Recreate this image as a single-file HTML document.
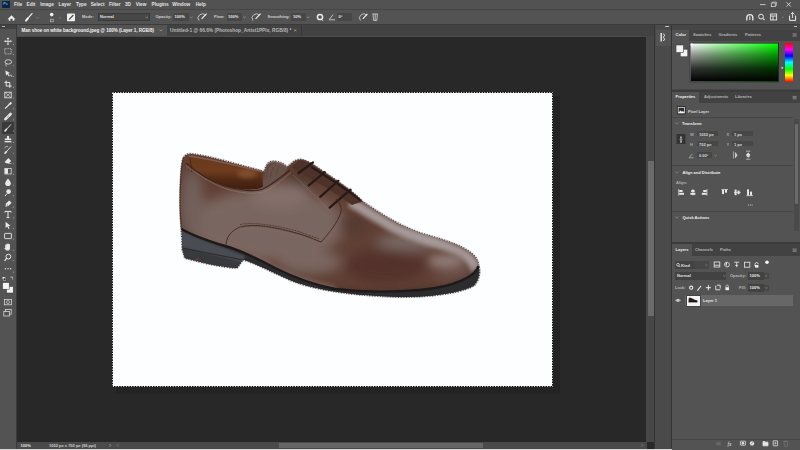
<!DOCTYPE html>
<html><head><meta charset="utf-8">
<style>
*{margin:0;padding:0;box-sizing:border-box}
html,body{width:800px;height:450px;overflow:hidden;background:#282828;font-family:"Liberation Sans",sans-serif;color:#d6d6d6}
.a{position:absolute}
.t{position:absolute;font-size:4.7px;line-height:6px;white-space:nowrap;color:#e4e4e4;font-weight:bold}
.s{position:absolute;font-size:4px;line-height:5px;white-space:nowrap;color:#d0d0d0;font-weight:bold}
.b{font-weight:bold}
svg{position:absolute;overflow:visible}
</style></head><body>
<!-- ============ MENUBAR ============ -->
<div class="a" style="left:0;top:0;width:800px;height:9px;background:#525252"></div>
<div class="a" style="left:2px;top:1px;width:8px;height:7px;background:#0b2542;border-radius:1px"></div>
<div class="t b" style="left:3.2px;top:2px;font-size:3.8px;line-height:5px;color:#5fb0ff">Ps</div>
<div class="t" style="left:14px;top:1.6px">File</div>
<div class="t" style="left:26.5px;top:1.6px">Edit</div>
<div class="t" style="left:40.3px;top:1.6px">Image</div>
<div class="t" style="left:58.6px;top:1.6px">Layer</div>
<div class="t" style="left:76px;top:1.6px">Type</div>
<div class="t" style="left:90.7px;top:1.6px">Select</div>
<div class="t" style="left:109px;top:1.6px">Filter</div>
<div class="t" style="left:125px;top:1.6px">3D</div>
<div class="t" style="left:135.7px;top:1.6px">View</div>
<div class="t" style="left:151.6px;top:1.6px">Plugins</div>
<div class="t" style="left:172.3px;top:1.6px">Window</div>
<div class="t" style="left:195.7px;top:1.6px">Help</div>
<svg style="left:0;top:0" width="800" height="9">
 <line x1="760" y1="4.6" x2="765.5" y2="4.6" stroke="#d0d0d0" stroke-width="0.9"/>
 <rect x="771.3" y="3" width="4" height="3.6" fill="none" stroke="#d0d0d0" stroke-width="0.8"/>
 <path d="M772.6 3V2h3.8v3.5h-1" fill="none" stroke="#d0d0d0" stroke-width="0.7"/>
 <path d="M786.5 2.3l4.3 4.3M790.8 2.3l-4.3 4.3" stroke="#d8d8d8" stroke-width="0.9"/>
</svg>
<!-- ============ OPTIONS BAR ============ -->
<div class="a" style="left:0;top:9px;width:800px;height:15.5px;background:#535353"></div>
<div class="a" style="left:0;top:24px;width:800px;height:1px;background:#3b3b3b"></div>
<div class="a" style="left:0;top:8.6px;width:800px;height:0.8px;background:#464646"></div>
<svg style="left:0;top:9px" width="800" height="16">
 <!-- home -->
 <path d="M7.6 10.2L11.5 6.2L15.4 10.2H14.2V11.8H12.6V9.8H10.4V11.8H8.8V10.2Z" fill="#f2f2f2"/>
 <!-- brush -->
 <path d="M27.6 9.6L32 4.6" stroke="#eaeaea" stroke-width="1.3" stroke-linecap="round"/><path d="M26 11.6L27.8 9.4" stroke="#f4f4f4" stroke-width="2" stroke-linecap="round"/>
 <path d="M36.2 8.2l1.3 1.1l1.3-1.1" stroke="#8a8a8a" stroke-width="0.6" fill="none"/>
 <circle cx="51.7" cy="5.6" r="1.8" fill="#f0f0f0"/>
 <rect x="50.3" y="10.2" width="3" height="2.6" fill="none" stroke="#c8c8c8" stroke-width="0.6"/>
 <path d="M58.8 8.2l1.3 1.1l1.3-1.1" stroke="#8a8a8a" stroke-width="0.6" fill="none"/>
 <rect x="67" y="4.6" width="8" height="7.6" rx="0.8" fill="#f0f0f0"/>
 <path d="M69 10.6L73.4 6" stroke="#444" stroke-width="1.1"/>
 <!-- airbrush pressure icons -->
 <path d="M199 11.5a4 4 0 1 1 6.5 -5" fill="none" stroke="#dadada" stroke-width="0.8"/>
 <path d="M201.6 9.8L206.6 4.6" stroke="#eeeeee" stroke-width="1.2"/>
 <path d="M253 11.5a4 4 0 1 1 6.5 -5" fill="none" stroke="#dadada" stroke-width="0.8"/>
 <path d="M255.6 9.8L260.6 4.6" stroke="#eeeeee" stroke-width="1.2"/>
 <!-- gear -->
 <circle cx="320" cy="8" r="2.6" fill="none" stroke="#eaeaea" stroke-width="1.5"/>
 <circle cx="322.6" cy="11.2" r="0.6" fill="#ddd"/>
 <!-- angle -->
 <path d="M329.2 10.8H335M329.2 10.8L333 5.6" stroke="#d8d8d8" stroke-width="0.8" fill="none"/>
 <!-- pressure size -->
 <path d="M360.4 11.5a4 4 0 1 1 6.5 -5" fill="none" stroke="#dadada" stroke-width="0.8"/>
 <path d="M362.8 9.8L367.4 4.8" stroke="#eeeeee" stroke-width="1.2"/>
 <!-- symmetry -->
 <path d="M372.4 5h5.6M373 5l0.6 6.4h3.2l0.6-6.4M375.2 5v6.4" stroke="#d8d8d8" stroke-width="0.8" fill="none"/>
 <!-- right icons -->
 <path d="M746.8 11.6v-3a3 3 0 0 1 6 0v3" stroke="#eeeeee" stroke-width="1.3" fill="none"/>
 <path d="M749.8 11v-3.6" stroke="#eeeeee" stroke-width="1"/>
 <circle cx="761" cy="7.6" r="2.4" fill="none" stroke="#e6e6e6" stroke-width="1"/>
 <path d="M762.8 9.4l1.8 1.8" stroke="#e6e6e6" stroke-width="1.1"/>
 <rect x="770.6" y="5" width="6" height="6" fill="none" stroke="#e6e6e6" stroke-width="0.9"/>
 <path d="M770.6 7h6M773 7v4" stroke="#e6e6e6" stroke-width="0.9"/>
 <path d="M782 8.4h1.6" stroke="#9a9a9a" stroke-width="0.6"/>
 <path d="M789.6 6.6v4.8h6v-4.8" stroke="#eeeeee" stroke-width="1" fill="none"/>
 <path d="M792.6 9V3.6M790.9 5.2l1.7-1.7l1.7 1.7" stroke="#eeeeee" stroke-width="0.9" fill="none"/>
</svg>
<div class="s" style="left:82px;top:14.3px">Mode:</div>
<div class="a" style="left:97.5px;top:13.4px;width:52px;height:7.2px;background:#474747;border:0.5px solid #3a3a3a"></div>
<div class="s" style="left:100px;top:14.3px;color:#e0e0e0">Normal</div>
<svg style="left:0;top:9px" width="800" height="16">
 <path d="M145.6 7.8l1.2 1l1.2-1" stroke="#aaa" stroke-width="0.6" fill="none"/>
 <path d="M190.2 7.8l1.2 1l1.2-1" stroke="#aaa" stroke-width="0.6" fill="none"/>
 <path d="M243.4 7.8l1.2 1l1.2-1" stroke="#aaa" stroke-width="0.6" fill="none"/>
 <path d="M307 7.8l1.2 1l1.2-1" stroke="#aaa" stroke-width="0.6" fill="none"/>
</svg>
<div class="s" style="left:155.5px;top:14.3px">Opacity:</div>
<div class="a" style="left:173px;top:13.4px;width:15.5px;height:7.2px;background:#474747"></div>
<div class="s" style="left:174.5px;top:14.3px;color:#e8e8e8">100%</div>
<div class="s" style="left:214px;top:14.3px">Flow:</div>
<div class="a" style="left:226.5px;top:13.4px;width:15.5px;height:7.2px;background:#474747"></div>
<div class="s" style="left:228px;top:14.3px;color:#e8e8e8">100%</div>
<div class="s" style="left:267.5px;top:14.3px">Smoothing:</div>
<div class="a" style="left:291px;top:13.4px;width:14.5px;height:7.2px;background:#474747"></div>
<div class="s" style="left:293px;top:14.3px;color:#e8e8e8">10%</div>
<div class="a" style="left:336.5px;top:13.4px;width:15.5px;height:7.2px;background:#474747"></div>
<div class="s" style="left:338.5px;top:14.3px;color:#e8e8e8">0°</div>
<!-- ============ TAB BAR ============ -->
<div class="a" style="left:17px;top:25px;width:638px;height:10.5px;background:#424242"></div>
<div class="a" style="left:17px;top:35.5px;width:630px;height:0.8px;background:#4a4a4a"></div>
<div class="a" style="left:17px;top:25px;width:150px;height:11px;background:#535353"></div>
<div class="t b" style="left:21.5px;top:27.5px;color:#f4f4f4;font-size:4.5px">Man shoe on white background.jpeg @ 100% (Layer 1, RGB/8)</div>
<svg style="left:0;top:25px" width="320" height="11"><path d="M159.4 4.6l1.4 1.4l1.4-1.4" stroke="#bdbdbd" stroke-width="0.6" fill="none"/><path d="M294.2 4.4l2 2M296.2 4.4l-2 2" stroke="#bdbdbd" stroke-width="0.6"/></svg>
<div class="t" style="left:170px;top:27.6px;color:#b8b8b8;font-size:4.8px">Untitled-1 @ 66.6% (Photoshop_Artist1PPIx, RGB/8) *</div>
<div class="a" style="left:301px;top:25px;width:0.6px;height:10.5px;background:#383838"></div>
<!-- ============ TOOLBAR ============ -->
<div class="a" style="left:0;top:25px;width:17px;height:425px;background:#535353"></div>
<div class="a" style="left:0;top:25px;width:16.5px;height:4px;background:#424242"></div>
<div class="a" style="left:2px;top:26.3px;width:3px;height:1.2px;background:#bbb;border-radius:1px"></div>
<div class="a" style="left:16px;top:25px;width:1px;height:425px;background:#3a3a3a"></div>
<div class="a" style="left:2px;top:122px;width:12px;height:12px;background:#3a3a3a;border-radius:1px"></div>
<!--TOOLS--><svg style="left:0;top:0" width="17" height="450"><g transform="translate(8 41.3)"><path d="M0-3.4v6.8M-3.4 0h6.8" stroke="#e8e8e8" stroke-width="0.9"/><path d="M0-3.8l-1.3 1.4h2.6zM0 3.8l-1.3-1.4h2.6zM-3.8 0l1.4-1.3v2.6zM3.8 0l-1.4-1.3v2.6z" fill="#e8e8e8"/></g><path d="M12.6 44.9h1.2v-1.2z" fill="#bbbbbb"/><g transform="translate(8 51.3)"><rect x="-3.2" y="-2.6" width="6.4" height="5.2" fill="none" stroke="#e8e8e8" stroke-width="0.7" stroke-dasharray="1 0.7"/></g><path d="M12.6 54.9h1.2v-1.2z" fill="#bbbbbb"/><g transform="translate(8 62.5)"><ellipse cx="0.3" cy="-0.6" rx="3.3" ry="2.2" fill="none" stroke="#e8e8e8" stroke-width="0.8"/><path d="M-2 1.2q-0.6 1.6 0.6 2.6" stroke="#e8e8e8" stroke-width="0.7" fill="none"/></g><path d="M12.6 66.1h1.2v-1.2z" fill="#bbbbbb"/><g transform="translate(8 73.4)"><path d="M-2.6-2.8l4.6 2.4l-1.8 0.6l1.6 2.4l-1 0.6l-1.4-2.4l-1.4 1.2z" fill="#e8e8e8"/><path d="M1.4 1.8h2.2v1.8" stroke="#e8e8e8" stroke-width="0.6" fill="none"/></g><path d="M12.6 77.0h1.2v-1.2z" fill="#bbbbbb"/><g transform="translate(8 84.2)"><path d="M-1.8-3.6v5.4h5.4M-3.6-1.8h5.4v5.4" stroke="#e8e8e8" stroke-width="1" fill="none"/></g><path d="M12.6 87.8h1.2v-1.2z" fill="#bbbbbb"/><g transform="translate(8 95)"><rect x="-3.2" y="-2.8" width="6.4" height="5.6" fill="none" stroke="#e8e8e8" stroke-width="0.8"/><path d="M-3.2-2.8l6.4 5.6M3.2-2.8l-6.4 5.6" stroke="#e8e8e8" stroke-width="0.6"/></g><path d="M12.6 98.6h1.2v-1.2z" fill="#bbbbbb"/><g transform="translate(8 105.7)"><path d="M-3 3l4.2-4.2" stroke="#e8e8e8" stroke-width="1.2"/><path d="M0.6-1.6l1.6-1.8a1 1 0 0 1 1.4 1.4l-1.8 1.6z" fill="#e8e8e8"/></g><path d="M12.6 109.3h1.2v-1.2z" fill="#bbbbbb"/><g transform="translate(8 116.6)"><path d="M-2.6 2.6l5.2-5.2" stroke="#e8e8e8" stroke-width="2.6" stroke-linecap="round"/><path d="M-0.6 0.6l1.2-1.2" stroke="#555" stroke-width="0.8"/></g><path d="M12.6 120.19999999999999h1.2v-1.2z" fill="#bbbbbb"/><g transform="translate(8 127.8)"><path d="M-3 3.2l1.4-1.6" stroke="#e8e8e8" stroke-width="1.6" stroke-linecap="round"/><path d="M-1.2 1.2l4.2-4.6" stroke="#e8e8e8" stroke-width="0.9"/></g><path d="M12.6 131.4h1.2v-1.2z" fill="#bbbbbb"/><g transform="translate(8 139.3)"><path d="M-1-3.4h2v2.6h2.2v1.6h-6.4v-1.6h2.2z" fill="#e8e8e8"/><rect x="-3.4" y="1.6" width="6.8" height="1.4" fill="#e8e8e8"/></g><path d="M12.6 142.9h1.2v-1.2z" fill="#bbbbbb"/><g transform="translate(8 150)"><path d="M-3 3.2l1.4-1.6" stroke="#e8e8e8" stroke-width="1.6" stroke-linecap="round"/><path d="M-1.2 1.2l4.2-4.6" stroke="#e8e8e8" stroke-width="0.9"/><path d="M-3.4-1.6a2.4 2.4 0 0 1 3.4-1.8" stroke="#e8e8e8" stroke-width="0.6" fill="none"/></g><path d="M12.6 153.6h1.2v-1.2z" fill="#bbbbbb"/><g transform="translate(8 160.5)"><path d="M-3.4 1.4l3.8-3.8l2.8 2.8l-2.4 2.4h-2.6z" fill="#e8e8e8"/><path d="M-0.2 3h3.6" stroke="#e8e8e8" stroke-width="0.6"/></g><path d="M12.6 164.1h1.2v-1.2z" fill="#bbbbbb"/><g transform="translate(8 171.2)"><rect x="-3.2" y="-2.8" width="6.4" height="5.6" fill="none" stroke="#e8e8e8" stroke-width="0.7"/><rect x="-3" y="-2.6" width="3" height="5.2" fill="#e8e8e8"/></g><path d="M12.6 174.79999999999998h1.2v-1.2z" fill="#bbbbbb"/><g transform="translate(8 182)"><path d="M0-3.6q-2.8 3.4-2.8 4.8a2.8 2.8 0 0 0 5.6 0q0-1.4-2.8-4.8z" fill="#e8e8e8"/></g><path d="M12.6 185.6h1.2v-1.2z" fill="#bbbbbb"/><g transform="translate(8 192.6)"><circle cx="0.6" cy="-1" r="2.3" fill="#e8e8e8"/><path d="M-0.8 0.8l-2.2 2.6" stroke="#e8e8e8" stroke-width="1"/></g><path d="M12.6 196.2h1.2v-1.2z" fill="#bbbbbb"/><g transform="translate(8 203.8)"><path d="M-2.6 3l0.6-3.2l3.2-3.2l2.4 2.4l-3.2 3.2z" fill="#e8e8e8"/><circle cx="-0.6" cy="1.2" r="0.5" fill="#555"/></g><path d="M12.6 207.4h1.2v-1.2z" fill="#bbbbbb"/><g transform="translate(8 214.6)"><path d="M-3-3.2h6v1.2M-3-3.2v1.2M0-3.2v6.2M-1.4 3h2.8" stroke="#e8e8e8" stroke-width="1" fill="none"/></g><path d="M12.6 218.2h1.2v-1.2z" fill="#bbbbbb"/><g transform="translate(8 225.2)"><path d="M-2.4-3.4v6.2l1.6-1.6l1.4 2.6l1-0.5l-1.3-2.5h2.4z" fill="#e8e8e8"/></g><path d="M12.6 228.79999999999998h1.2v-1.2z" fill="#bbbbbb"/><g transform="translate(8 236)"><rect x="-3.4" y="-2.6" width="6.8" height="5.2" rx="0.5" fill="none" stroke="#e8e8e8" stroke-width="0.9"/></g><path d="M12.6 239.6h1.2v-1.2z" fill="#bbbbbb"/><g transform="translate(8 247.2)"><path d="M-2.8 0.6v-2.6a0.6 0.6 0 0 1 1.2 0v-1a0.6 0.6 0 0 1 1.2 0v-0.2a0.6 0.6 0 0 1 1.2 0v0.6a0.6 0.6 0 0 1 1.2 0v3.4q0 2.6-2.4 2.6h-0.6q-1.2 0-2.6-2z" fill="#e8e8e8"/></g><path d="M12.6 250.79999999999998h1.2v-1.2z" fill="#bbbbbb"/><g transform="translate(8 257.4)"><circle cx="0.4" cy="-0.8" r="2.4" fill="none" stroke="#e8e8e8" stroke-width="1"/><path d="M-1.2 0.8l-2.2 2.6" stroke="#e8e8e8" stroke-width="1.3"/></g><path d="M12.6 261.0h1.2v-1.2z" fill="#bbbbbb"/><g transform="translate(8 268.8)"><circle cx="-2.6" cy="0" r="0.7" fill="#e8e8e8"/><circle cx="0" cy="0" r="0.7" fill="#e8e8e8"/><circle cx="2.6" cy="0" r="0.7" fill="#e8e8e8"/></g><path d="M12.6 272.40000000000003h1.2v-1.2z" fill="#bbbbbb"/><rect x="2.6" y="277" width="2.2" height="2.2" fill="#eee"/><rect x="3.6" y="278" width="2.2" height="2.2" fill="#222" stroke="#eee" stroke-width="0.4"/><path d="M10 277.2h2.6v2.6M11.8 276.4l0.8 0.8l-0.8 0.8" stroke="#ddd" stroke-width="0.5" fill="none"/><rect x="6.6" y="286.4" width="6.6" height="6.6" fill="#f4f4f4" stroke="#333" stroke-width="0.5"/><rect x="2.6" y="282.6" width="6.6" height="6.6" fill="#f4f4f4" stroke="#333" stroke-width="0.5"/><rect x="4.6" y="299.4" width="6.8" height="5.4" fill="none" stroke="#e8e8e8" stroke-width="0.7"/><circle cx="8" cy="302.1" r="1.5" fill="none" stroke="#e8e8e8" stroke-width="0.6"/><rect x="5.4" y="309.6" width="5.8" height="4.6" fill="none" stroke="#e8e8e8" stroke-width="0.7"/><rect x="3.8" y="311.4" width="5.8" height="4.6" fill="#535353" stroke="#e8e8e8" stroke-width="0.7"/></svg><!--/TOOLS-->
<!-- ============ CANVAS ============ -->
<div class="a" style="left:116px;top:96px;width:444px;height:298px;background:#232323"></div>
<div class="a" style="left:113px;top:93px;width:439px;height:293px;background:#fdfeff"></div>
<!--SHOE--><svg style="left:0;top:0" width="800" height="450"><defs>
<filter id="bl6" x="-50%" y="-50%" width="200%" height="200%"><feGaussianBlur stdDeviation="6"/></filter>
<filter id="bl4" x="-50%" y="-50%" width="200%" height="200%"><feGaussianBlur stdDeviation="4"/></filter>
<filter id="bl2" x="-30%" y="-50%" width="160%" height="200%"><feGaussianBlur stdDeviation="2.2"/></filter>
<filter id="bl1" x="-30%" y="-50%" width="160%" height="200%"><feGaussianBlur stdDeviation="1"/></filter>
<linearGradient id="ling" x1="0" y1="0" x2="0" y2="1">
  <stop offset="0" stop-color="#5a2c16"/><stop offset="0.3" stop-color="#6a3418"/><stop offset="0.75" stop-color="#5e2e16"/><stop offset="1" stop-color="#3e1e10"/></linearGradient>
<clipPath id="upclip"><path d="M183.5 158C185 155 188 153.5 192 154C210 156 235 164 262 171L264 172L266 167C268 162 271 161 275 161.5C280 162 284 164 287 167L291 164C294 161 297 159.5 300 159.5C307 160 315 166 323 171.6C330 176 340 183 349 189.7C354 193.5 358 197 362.5 201.5C375 210 395 224 420 233C440 239 460 244 471 253C476 257 478.5 261 478.5 266C476 276 455 287 420 290C395 292 360 292 335 289C315 285 295 278 275 268C260 260 240 250 225 246C205 240 190 234 181.5 229C180 215 180 190 181 175C181.5 168 182 162 183.5 158Z"/></clipPath>
<clipPath id="soleclip"><path d="M181.5 229C190 234 205 240 225 246C240 250 260 260 275 268C295 278 315 285 335 289C360 292 395 292 420 290C455 287 476 276 478.5 266C480.5 270.5 479.5 280 474 285.5C465 291 440 297 400 297C340 295 310 288 290 280C270 271 255 263 243 259.5L237 268C220 267 200 262 185 258L182.5 250Z"/></clipPath>
</defs>
<path d="M183.5 158C185 155 188 153.5 192 154C210 156 235 164 262 171L264 172L266 167C268 162 271 161 275 161.5C280 162 284 164 287 167L291 164C294 161 297 159.5 300 159.5C307 160 315 166 323 171.6C330 176 340 183 349 189.7C354 193.5 358 197 362.5 201.5C375 210 395 224 420 233C440 239 460 244 471 253C476 257 478.5 261 478.5 266C480.5 270.5 479.5 280 474 285.5C465 291 440 297 400 297C340 295 310 288 290 280C270 271 255 263 243 259.5L237 268C220 267 200 262 185 258L182.5 250L181.5 229C180 215 180 190 181 175C181.5 168 182 162 183.5 158Z" fill="none" stroke="#d4cece" stroke-width="2.6" opacity="0.8"/>
<path d="M183.5 158C185 155 188 153.5 192 154C210 156 235 164 262 171L264 172L266 167C268 162 271 161 275 161.5C280 162 284 164 287 167L291 164C294 161 297 159.5 300 159.5C307 160 315 166 323 171.6C330 176 340 183 349 189.7C354 193.5 358 197 362.5 201.5C375 210 395 224 420 233C440 239 460 244 471 253C476 257 478.5 261 478.5 266C480.5 270.5 479.5 280 474 285.5C465 291 440 297 400 297C340 295 310 288 290 280C270 271 255 263 243 259.5L237 268C220 267 200 262 185 258L182.5 250L181.5 229C180 215 180 190 181 175C181.5 168 182 162 183.5 158Z" fill="none" stroke="#4a4a4a" stroke-width="1.9" stroke-dasharray="1 1.6"/>
<g clip-path="url(#soleclip)"><rect x="175" y="225" width="310" height="80" fill="#2c2c2e"/><path d="M181 246L245 258L237 270L181 262Z" fill="#38393c"/>
<path d="M181 230C200 240 225 247 245 256L243 262C220 256 200 252 181 247Z" fill="#4a4d52" filter="url(#bl1)"/>
<path d="M182.8 248C200 252 225 256 243 260" fill="none" stroke="#2a2a2c" stroke-width="1"/>
<path d="M243 259.5C255 263 270 271 290 280C310 288 340 295 400 297C440 297 465 291 474 286" fill="none" stroke="#2a2a2a" stroke-width="1.4"/>
</g>
<rect x="195.6" y="258.6" width="3" height="1.2" fill="#a83030"/>
<g clip-path="url(#upclip)">
 <rect x="175" y="150" width="310" height="145" fill="#603f34"/>
 <g filter="url(#bl6)">
  <ellipse cx="268" cy="225" rx="78" ry="36" fill="#7a6660"/>
  <ellipse cx="280" cy="195" rx="30" ry="12" fill="#84706c"/>
  <ellipse cx="192" cy="205" rx="12" ry="35" fill="#72605c"/>
  <ellipse cx="304" cy="178" rx="16" ry="8" fill="#4e3428"/>
  <ellipse cx="385" cy="266" rx="40" ry="16" fill="#52322a"/>
  <ellipse cx="352" cy="225" rx="14" ry="10" fill="#553a30"/>
  <ellipse cx="455" cy="270" rx="22" ry="14" fill="#6a4e46"/>
  <ellipse cx="310" cy="262" rx="32" ry="12" fill="#7a6660"/>
  <ellipse cx="410" cy="242" rx="34" ry="8" fill="#7a6a66"/>
 </g>
 <path d="M350 202C362 208 375 217 395 228C410 235 420 238 440 244C455 249 464 253 470 259C474 263 476 266 476 272" fill="none" stroke="#aca2a2" stroke-width="10" opacity="0.9" filter="url(#bl2)"/>
 <ellipse cx="446" cy="261" rx="18" ry="7" fill="#8e7a74" filter="url(#bl4)"/>
 <path d="M330 289C360 292 395 292 420 290C455 287 476 276 478.5 266" fill="none" stroke="#3e2e2a" stroke-width="4" opacity="0.5" filter="url(#bl2)"/>
 <path d="M255 258C265 264 275 270 290 276C305 282 320 285 335 289" fill="none" stroke="#8a7670" stroke-width="6" opacity="0.6" filter="url(#bl2)"/>
</g>
<linearGradient id="ling2" x1="0" y1="158" x2="0" y2="190" gradientUnits="userSpaceOnUse"><stop offset="0" stop-color="#6a3a1e"/><stop offset="0.4" stop-color="#6e3c1e"/><stop offset="0.7" stop-color="#4e2814"/><stop offset="1" stop-color="#3e1e10"/></linearGradient>
<path d="M189 156C205 158 235 165 262 171.5L263 187C255 191 240 190 225 186C210 180 197 172 190 167C188 163 188 160 189 156Z" fill="url(#ling2)"/>

<ellipse cx="247" cy="174" rx="10" ry="4" fill="#8e5a3a" opacity="0.7" filter="url(#bl2)"/>
<path d="M189 156C205 158 235 165 262 171.5" fill="none" stroke="#7e5e50" stroke-width="1.6"/>
<path d="M190 158C191 163 191 168 192 172" fill="none" stroke="#3a2418" stroke-width="0.8"/>
<path d="M263 188L265.5 170C267.5 164 271 161.5 275 161.5C280 162 284 164 288 167.5L282 177Z" fill="#66524a"/>
<path d="M266 166C268 162.5 272 161.5 276 162C280 162.5 284 164.5 287 167" fill="none" stroke="#8e7a72" stroke-width="1"/>
<path d="M270 178L273 167M276 175L279 166" stroke="#4e3a32" stroke-width="0.7" opacity="0.7"/>
<path d="M266 180L268 168C270 164 273 163 276 163" fill="none" stroke="#4e3a32" stroke-width="0.6"/>
<path d="M186 163C195 171 210 181 225 186C240 191 255 192 263 189C272 185 281 177 290 170" fill="none" stroke="#3e261c" stroke-width="1.2"/>
<path d="M186 165.5C196 173 210 183 225 188.5C240 193.5 256 194.5 265 191.5C273 188 282 180 291 172.5" fill="none" stroke="#9c8078" stroke-width="0.7" opacity="0.75"/>
<path d="M300 160C307 160.5 315 166 323 172C330 176.5 340 183.5 349 190C354 194 358 197.5 362.5 201.5L352 205C345 200 330 189 291 167Z" fill="#4c3229"/>
<path d="M311 167C320 172 335 182 348 191C354 195 358 198 361 201" fill="none" stroke="#2a1a15" stroke-width="2.2"/>
<path d="M300 159.6C307 160 315 166 323 171.6C330 176 340 183 349 189.7C354 193.5 358 197 362.5 201.5" fill="none" stroke="#5a3e34" stroke-width="0.8"/>
<path d="M293 175C305 186 318 198 330 211" fill="none" stroke="#9a8078" stroke-width="0.6" opacity="0.6"/>
<g stroke="#261a18" stroke-width="2.2" stroke-linecap="round">
 <path d="M298.5 173L313 162.5"/><path d="M308.7 185.4L324.8 172.2"/><path d="M320.2 196.9L338.4 180.8"/><path d="M329.6 207.7L350.6 189.6"/>
</g>
<path d="M226 246C226 238 230 231 240 227C255 223 275 227 300 234C310 237 316 240 321 242C330 232 338 222 341 212C342 206 339 202 336 199" fill="none" stroke="#43291f" stroke-width="0.9"/>
<path d="M227.2 247C228 240 232 234 241 230C256 226 275 230 300 237C310 240 316 243 322 245.5C332 235 340 224 343 213" fill="none" stroke="#8a6c62" stroke-width="0.55" opacity="0.65"/>
<path d="M240 224.5C255 222 275 225 300 232C308 235 314 237 319 239" fill="none" stroke="#3a241c" stroke-width="0.8" stroke-dasharray="0.9 0.7"/>
<path d="M242 227C256 224.5 275 227.5 300 234.5C308 237.5 314 239.5 319 241.5" fill="none" stroke="#3a241c" stroke-width="0.6" stroke-dasharray="0.9 0.7" opacity="0.7"/>
<path d="M181.5 229C190 234 205 240 225 246C240 250 260 260 275 268C295 278 315 285 335 289C360 292 395 292 420 290C455 287 476 276 478.5 266" fill="none" stroke="#1e1a1a" stroke-width="2.4"/>
<path d="M183.5 158C182 162 181.5 168 181 175C180 190 180 215 181.5 229" fill="none" stroke="#4a3630" stroke-width="1.2"/>
</svg><svg style="left:0;top:0" width="800" height="450"><rect x="112.5" y="92.5" width="440" height="294" fill="none" stroke="#0a0a0a" stroke-width="1"/><rect x="112.5" y="92.5" width="440" height="294" fill="none" stroke="#f0f0f0" stroke-width="1" stroke-dasharray="1 1.6"/></svg><!--/SHOE-->
<!-- ============ DOC SCROLLBARS ============ -->
<div class="a" style="left:646px;top:36px;width:9px;height:406px;background:#474747"></div>
<div class="a" style="left:648px;top:161px;width:6px;height:155px;background:#6b6b6b"></div>
<div class="a" style="left:654px;top:25px;width:1px;height:425px;background:#333"></div>
<!-- status bar -->
<div class="a" style="left:17px;top:441.8px;width:630px;height:6.8px;background:#4a4a4a"></div>
<div class="s" style="left:20.5px;top:443px;color:#e0e0e0">100%</div>
<div class="s" style="left:49px;top:443px;color:#d0d0d0">1052 px x 702 px (96 ppi)</div>
<svg style="left:0;top:442px" width="130" height="7"><path d="M109.6 2.2l1.2 1.2l-1.2 1.2" stroke="#ccc" stroke-width="0.6" fill="none"/></svg>
<div class="a" style="left:279px;top:442.6px;width:204px;height:5.6px;background:#666666"></div>
<svg style="left:0;top:442px" width="660" height="7"><path d="M118.4 2.2l-1.2 1.2l1.2 1.2" stroke="#999" stroke-width="0.6" fill="none"/><path d="M641.6 2.2l1.2 1.2l-1.2 1.2" stroke="#999" stroke-width="0.6" fill="none"/></svg>
<div class="a" style="left:0;top:448.5px;width:800px;height:2px;background:#d4d4d4"></div>
<!-- ============ ICON COLUMN ============ -->
<div class="a" style="left:655px;top:25px;width:17px;height:424px;background:#4a4a4a"></div>
<div class="a" style="left:671px;top:25px;width:1px;height:424px;background:#333"></div>
<div class="a" style="left:655.5px;top:30px;width:15.5px;height:16px;background:#535353"></div>
<!-- strip handles -->
<div class="a" style="left:672px;top:25px;width:128px;height:4.5px;background:#474747"></div>
<div class="a" style="left:665px;top:25.8px;width:3.5px;height:1.3px;background:#c8c8c8;border-radius:0.5px"></div>
<div class="a" style="left:793.5px;top:25.8px;width:3.5px;height:1.3px;background:#c8c8c8;border-radius:0.5px"></div>
<svg style="left:0;top:0" width="800" height="60">
 <rect x="660.5" y="33" width="1.4" height="8.5" fill="#eeeeee"/>
 <path d="M663.4 33.6q2.4 1.4 0 3.8q2.4 1.6 0 3.6" stroke="#eeeeee" stroke-width="1" fill="none"/>
</svg>
<!-- right panel bg -->
<div class="a" style="left:672px;top:29.5px;width:128px;height:420px;background:#535353"></div>
<!-- COLOR PANEL -->
<div class="a" style="left:672px;top:29.5px;width:128px;height:11px;background:#424242"></div>
<div class="a" style="left:672px;top:29.5px;width:17px;height:11px;background:#535353"></div>
<div class="s b" style="left:675.5px;top:31.6px;color:#f0f0f0">Color</div>
<div class="s" style="left:693px;top:31.6px;color:#b4b4b4">Swatches</div>
<div class="s" style="left:718.5px;top:31.6px;color:#b4b4b4">Gradients</div>
<div class="s" style="left:745px;top:31.6px;color:#b4b4b4">Patterns</div>
<svg style="left:0;top:0" width="800" height="100">
 <path d="M792.6 33.8h4M792.6 35h4M792.6 36.2h4" stroke="#a8a8a8" stroke-width="0.6"/>
 <rect x="680.2" y="49.2" width="7.6" height="7.6" fill="#f4f4f4" stroke="#3a3a3a" stroke-width="0.6"/>
 <rect x="676" y="45" width="7.6" height="7.6" fill="#f4f4f4" stroke="#3a3a3a" stroke-width="0.6"/>
 <defs>
  <linearGradient id="cg1" x1="0" y1="0" x2="1" y2="0"><stop offset="0" stop-color="#fff"/><stop offset="1" stop-color="#00ff00"/></linearGradient>
  <linearGradient id="cg2" x1="0" y1="0" x2="0" y2="1"><stop offset="0" stop-color="#000" stop-opacity="0"/><stop offset="0.3" stop-color="#000" stop-opacity="0.42"/><stop offset="0.65" stop-color="#000" stop-opacity="0.8"/><stop offset="1" stop-color="#000"/></linearGradient>
  <linearGradient id="hue" x1="0" y1="0" x2="0" y2="1"><stop offset="0" stop-color="#ff0000"/><stop offset="0.17" stop-color="#ff00ff"/><stop offset="0.33" stop-color="#0000ff"/><stop offset="0.5" stop-color="#00ffff"/><stop offset="0.67" stop-color="#00ff00"/><stop offset="0.83" stop-color="#ffff00"/><stop offset="1" stop-color="#ff0000"/></linearGradient>
 </defs>
 <rect x="689.8" y="42.8" width="89" height="39.4" fill="#1c1c1c"/><rect x="690.5" y="43.5" width="87.5" height="38" fill="url(#cg1)"/>
 <rect x="690.5" y="43.5" width="87.5" height="38" fill="url(#cg2)"/>
 <circle cx="691.5" cy="44.5" r="1.1" fill="none" stroke="#fff" stroke-width="0.5"/>
 <rect x="785" y="43" width="8" height="39" fill="url(#hue)"/>
 <path d="M781.6 66.4l1.8 1.4l-1.8 1.4z" fill="#f0f0f0"/>
 <path d="M793.6 66.4l-1.8 1.4l1.8 1.4z" fill="#f0f0f0" opacity="0"/>
</svg>
<div class="a" style="left:672px;top:89px;width:128px;height:1px;background:#474747"></div>
<div class="a" style="left:672px;top:90px;width:128px;height:2px;background:#3c3c3c"></div>
<!-- PROPERTIES -->
<div class="a" style="left:672px;top:92px;width:128px;height:11px;background:#424242"></div>
<div class="a" style="left:672px;top:92px;width:27px;height:11px;background:#535353"></div>
<div class="s b" style="left:675.5px;top:94.2px;color:#f0f0f0">Properties</div>
<div class="s" style="left:704px;top:94.2px;color:#b4b4b4">Adjustments</div>
<div class="s" style="left:735px;top:94.2px;color:#b4b4b4">Libraries</div>
<svg style="left:0;top:0" width="800" height="250">
 <path d="M792.6 96.4h4M792.6 97.6h4M792.6 98.8h4" stroke="#a8a8a8" stroke-width="0.6"/>
 <rect x="676.8" y="106" width="9" height="8.4" rx="1" fill="#2e2e2e"/>
 <rect x="678.2" y="107.4" width="6.2" height="5.6" fill="none" stroke="#eee" stroke-width="0.7"/>
 <path d="M678.2 113l2.2-2.6l1.6 1.4l1-1l1.4 2.2z" fill="#eee"/>
 <path d="M675.2 122.6l1.6 1.4l1.6-1.4" stroke="#a0a0a0" stroke-width="0.6" fill="none"/>
 <rect x="676.5" y="134" width="9" height="10" fill="#333"/>
 <path d="M681 136.4v1.8M681 141v1.8" stroke="#eee" stroke-width="1.2"/>
 <circle cx="681" cy="139.6" r="0.9" fill="none" stroke="#eee" stroke-width="0.6"/>
 <path d="M675.2 171.6l1.6 1.4l1.6-1.4" stroke="#a0a0a0" stroke-width="0.6" fill="none"/>
 <path d="M675.2 216.6l1.6 1.4l1.6-1.4" stroke="#a0a0a0" stroke-width="0.6" fill="none"/>
 <path d="M689 157.8h4.6M689.4 157.4l3-3.6" stroke="#d0d0d0" stroke-width="0.6" fill="none"/>
 <path d="M733.4 151.4v7M735.4 152.6l1.6 2.6l-1.6 2.6z" stroke="#e0e0e0" stroke-width="0.6" fill="#e0e0e0"/>
 <path d="M746 151.2h4.4M746 159.2h4.4M748.2 152.8l-1.8 2.2h3.6zM748.2 157.4l-1.8-2h3.6z" stroke="#e8e8e8" stroke-width="0.6" fill="#e8e8e8"/>
 <path d="M714.4 155.2l1.2 1l1.2-1" stroke="#aaa" stroke-width="0.5" fill="none"/>
 <!-- align icons -->
 <g fill="#e6e6e6">
  <rect x="678.4" y="189" width="0.7" height="6.6"/><rect x="679.2" y="190" width="3.4" height="2"/><rect x="679.2" y="192.8" width="4.8" height="2"/>
  <rect x="692.6" y="189" width="0.7" height="6.6"/><rect x="691.2" y="190" width="3.4" height="2"/><rect x="690.4" y="192.8" width="5" height="2"/>
  <rect x="706.6" y="189" width="0.7" height="6.6"/><rect x="703.2" y="190" width="3.4" height="2"/><rect x="701.8" y="192.8" width="4.8" height="2"/>
  <rect x="721.4" y="189" width="6.6" height="0.7"/><rect x="722" y="189.7" width="2" height="4.4"/><rect x="725" y="189.7" width="2" height="3"/>
  <rect x="734" y="192.2" width="6.6" height="0.7"/><rect x="734.6" y="189.6" width="2" height="5.6"/><rect x="737.6" y="190.6" width="2" height="3.6"/>
  <rect x="746.4" y="195.4" width="6.6" height="0.7"/><rect x="747" y="189.4" width="2" height="6"/><rect x="750" y="191.6" width="2" height="3.8"/>
  <rect x="748" y="204.6" width="1" height="0.8"/><rect x="749.8" y="204.6" width="1" height="0.8"/><rect x="751.6" y="204.6" width="1" height="0.8"/>
 </g>
</svg>
<div class="s" style="left:688px;top:108.7px;color:#d6d6d6">Pixel Layer</div>
<div class="a" style="left:672px;top:116.5px;width:121px;height:0.6px;background:#464646"></div>
<div class="s b" style="left:682px;top:121px;color:#eeeeee">Transform</div>
<div class="s" style="left:690px;top:131.8px;color:#a8a8a8">W</div>
<div class="a" style="left:697px;top:131.3px;width:21px;height:5.2px;background:#474747"></div>
<div class="s" style="left:699px;top:131.8px;color:#dcdcdc">1052 px</div>
<div class="s" style="left:726.5px;top:131.8px;color:#a8a8a8">X</div>
<div class="a" style="left:732px;top:131.3px;width:21px;height:5.2px;background:#474747"></div>
<div class="s" style="left:734px;top:131.8px;color:#dcdcdc">1 px</div>
<div class="s" style="left:690px;top:141.8px;color:#a8a8a8">H</div>
<div class="a" style="left:697px;top:141.3px;width:21px;height:5.2px;background:#474747"></div>
<div class="s" style="left:699px;top:141.8px;color:#dcdcdc">702 px</div>
<div class="s" style="left:726.5px;top:141.8px;color:#a8a8a8">Y</div>
<div class="a" style="left:732px;top:141.3px;width:21px;height:5.2px;background:#474747"></div>
<div class="s" style="left:734px;top:141.8px;color:#dcdcdc">1 px</div>
<div class="a" style="left:697px;top:152.2px;width:14.5px;height:5.6px;background:#474747"></div>
<div class="s" style="left:699px;top:152.8px;color:#dcdcdc">0.00°</div>
<div class="a" style="left:672px;top:164.8px;width:121px;height:0.6px;background:#464646"></div>
<div class="s b" style="left:682.5px;top:170.2px;color:#eeeeee">Align and Distribute</div>
<div class="s" style="left:676px;top:179.6px;color:#b0b0b0">Align:</div>
<div class="a" style="left:672px;top:211.4px;width:121px;height:0.6px;background:#464646"></div>
<div class="s b" style="left:682.5px;top:215.4px;color:#eeeeee">Quick Actions</div>
<!-- properties scrollbar -->
<div class="a" style="left:794px;top:119px;width:5px;height:112px;background:#4a4a4a"></div>
<div class="a" style="left:794.6px;top:124px;width:3.8px;height:80px;background:#6b6b6b;border-radius:1px"></div>
<div class="a" style="left:672px;top:242px;width:128px;height:2px;background:#3c3c3c"></div>
<!-- LAYERS -->
<div class="a" style="left:672px;top:244px;width:128px;height:12px;background:#424242"></div>
<div class="a" style="left:672px;top:244px;width:19.5px;height:12px;background:#535353"></div>
<div class="s b" style="left:675.5px;top:247px;color:#f0f0f0">Layers</div>
<div class="s" style="left:695px;top:247px;color:#b4b4b4">Channels</div>
<div class="s" style="left:720px;top:247px;color:#b4b4b4">Paths</div>
<div class="a" style="left:675px;top:261px;width:18.5px;height:8px;background:#424242"></div>
<div class="a" style="left:693.5px;top:261px;width:15px;height:8px;background:#474747"></div>
<div class="s" style="left:681px;top:262.6px;color:#e0e0e0">Kind</div>
<div class="a" style="left:675px;top:272px;width:51px;height:7.5px;background:#424242"></div>
<div class="s" style="left:677px;top:273.3px;color:#e0e0e0">Normal</div>
<div class="s" style="left:730px;top:273.3px;color:#b8b8b8">Opacity:</div>
<div class="a" style="left:747.5px;top:272px;width:16px;height:7.5px;background:#424242"></div>
<div class="s" style="left:749.5px;top:273.3px;color:#e8e8e8">100%</div>
<div class="a" style="left:764px;top:272.5px;width:4.5px;height:6.5px;background:#474747"></div>
<div class="s" style="left:675px;top:285.2px;color:#b8b8b8">Lock:</div>
<div class="s" style="left:739px;top:285.2px;color:#b8b8b8">Fill:</div>
<div class="a" style="left:747.5px;top:284px;width:16px;height:7.5px;background:#424242"></div>
<div class="s" style="left:749.5px;top:285.2px;color:#e8e8e8">100%</div>
<div class="a" style="left:764px;top:284.5px;width:4.5px;height:6.5px;background:#474747"></div>
<div class="a" style="left:684.5px;top:294.5px;width:108.5px;height:11.6px;background:#676767"></div>
<div class="a" style="left:686px;top:295px;width:14.6px;height:11.6px;background:#f4f4f4;border:0.6px solid #444"></div>
<div class="s" style="left:703px;top:298.2px;color:#e6e6e6">Layer 1</div>
<svg style="left:0;top:0" width="800" height="450">
 <path d="M792.6 249h4M792.6 250.2h4M792.6 251.4h4" stroke="#a8a8a8" stroke-width="0.6"/>
 <circle cx="678" cy="264.8" r="1.4" fill="none" stroke="#eee" stroke-width="0.7"/>
 <path d="M679 265.8l1.3 1.3" stroke="#eee" stroke-width="0.8"/>
 <path d="M705.2 264.6l1.1 1l1.1-1" stroke="#aaa" stroke-width="0.5" fill="none"/>
 <path d="M723.2 275.4l1.1 1l1.1-1" stroke="#aaa" stroke-width="0.5" fill="none"/>
 <path d="M765.2 275.4l1.1 1l1.1-1" stroke="#aaa" stroke-width="0.5" fill="none"/>
 <path d="M765.2 287.4l1.1 1l1.1-1" stroke="#aaa" stroke-width="0.5" fill="none"/>
 <g stroke="#ececec" fill="none" stroke-width="0.8">
  <rect x="714.2" y="262" width="5.6" height="5"/>
  <path d="M714.2 265.2h5.6"/>
  <circle cx="727" cy="264.6" r="2.4"/>
  <path d="M734.2 262.2h5M736.7 262.2v5M735.2 265.4h3"/>
  <rect x="744.4" y="262.2" width="5.4" height="5"/>
  <path d="M755 266.2v-2a1.6 1.6 0 0 1 3.2 0"/>
  <circle cx="691.2" cy="287.7" r="1.6" stroke-width="1.1"/>
  <path d="M697.4 290.6l3.6-4.6" stroke-width="1.1"/>
  <path d="M708.4 285.2v5M705.9 287.7h5" stroke-width="1"/>
  <path d="M715.8 285.6v4.2h4.4M717 285.2h3.2v3.4" stroke-width="0.9"/>
 </g>
 <path d="M727 266.8a2.4 2.4 0 0 1 0-4.4z" fill="#ececec"/>
 <path d="M725.6 266.8l2.8-4.4" stroke="#535353" stroke-width="0.6"/>
 <rect x="755" y="265" width="3.4" height="2.6" fill="#ececec"/>
 <circle cx="767" cy="262.2" r="1.8" fill="#f4f4f4"/>
 <rect x="725.4" y="287.2" width="3.6" height="3" fill="#ececec"/>
 <path d="M726 287.2v-1a1.2 1.2 0 0 1 2.4 0v1" stroke="#ececec" stroke-width="0.6" fill="none"/>
 <!-- eye -->
 <path d="M675.6 300.4q2.4-2.4 4.8 0q-2.4 2.4-4.8 0z" fill="none" stroke="#eee" stroke-width="0.7"/>
 <circle cx="678" cy="300.4" r="0.8" fill="#eee"/>
 <!-- thumb shoe -->
 <path d="M688.6 298.6l1.2-1.2l2.6 1.2l2.4 1.2l2.6 0.8v1.4h-8.8z" fill="#2a1a16"/><path d="M688.6 302h8.8" stroke="#111" stroke-width="0.8"/>
 <!-- layer panel bottom bar -->
 <g fill="none" stroke="#e6e6e6" stroke-width="0.8">
  <rect x="740.4" y="441.2" width="5" height="4" rx="0.4"/>
  <path d="M763 441.6h2l0.6 0.6h2.4v3.6h-5z" fill="#e6e6e6"/>
  <rect x="773.2" y="440.8" width="4.4" height="5" rx="0.4"/>
 </g>
 <circle cx="742.9" cy="443.2" r="1.2" fill="#e6e6e6"/>
 <circle cx="752" cy="443.4" r="2.2" fill="#e6e6e6"/>
 <path d="M750.6 444.6l2.8-2.6" stroke="#535353" stroke-width="0.6"/>
 <path d="M775.4 442v2.4M774.2 443.2h2.4" stroke="#e6e6e6" stroke-width="0.6"/>
 <text x="727.4" y="446" font-size="5.5" font-style="italic" fill="#e6e6e6" font-family="Liberation Serif">fx</text>
 <path d="M716.2 442.2h4.6M716.2 443.4h4.6M716.2 444.6h4.6" stroke="#7a7a7a" stroke-width="0.6"/>
 <path d="M783.4 441.6h4.4M784 442.2l0.4 4h3l0.4-4M784.6 441.6v-0.6h2.2v0.6" stroke="#7a7a7a" stroke-width="0.7" fill="none"/>
</svg>
<div class="a" style="left:672px;top:438.5px;width:128px;height:0.6px;background:#464646"></div>

</body></html>
